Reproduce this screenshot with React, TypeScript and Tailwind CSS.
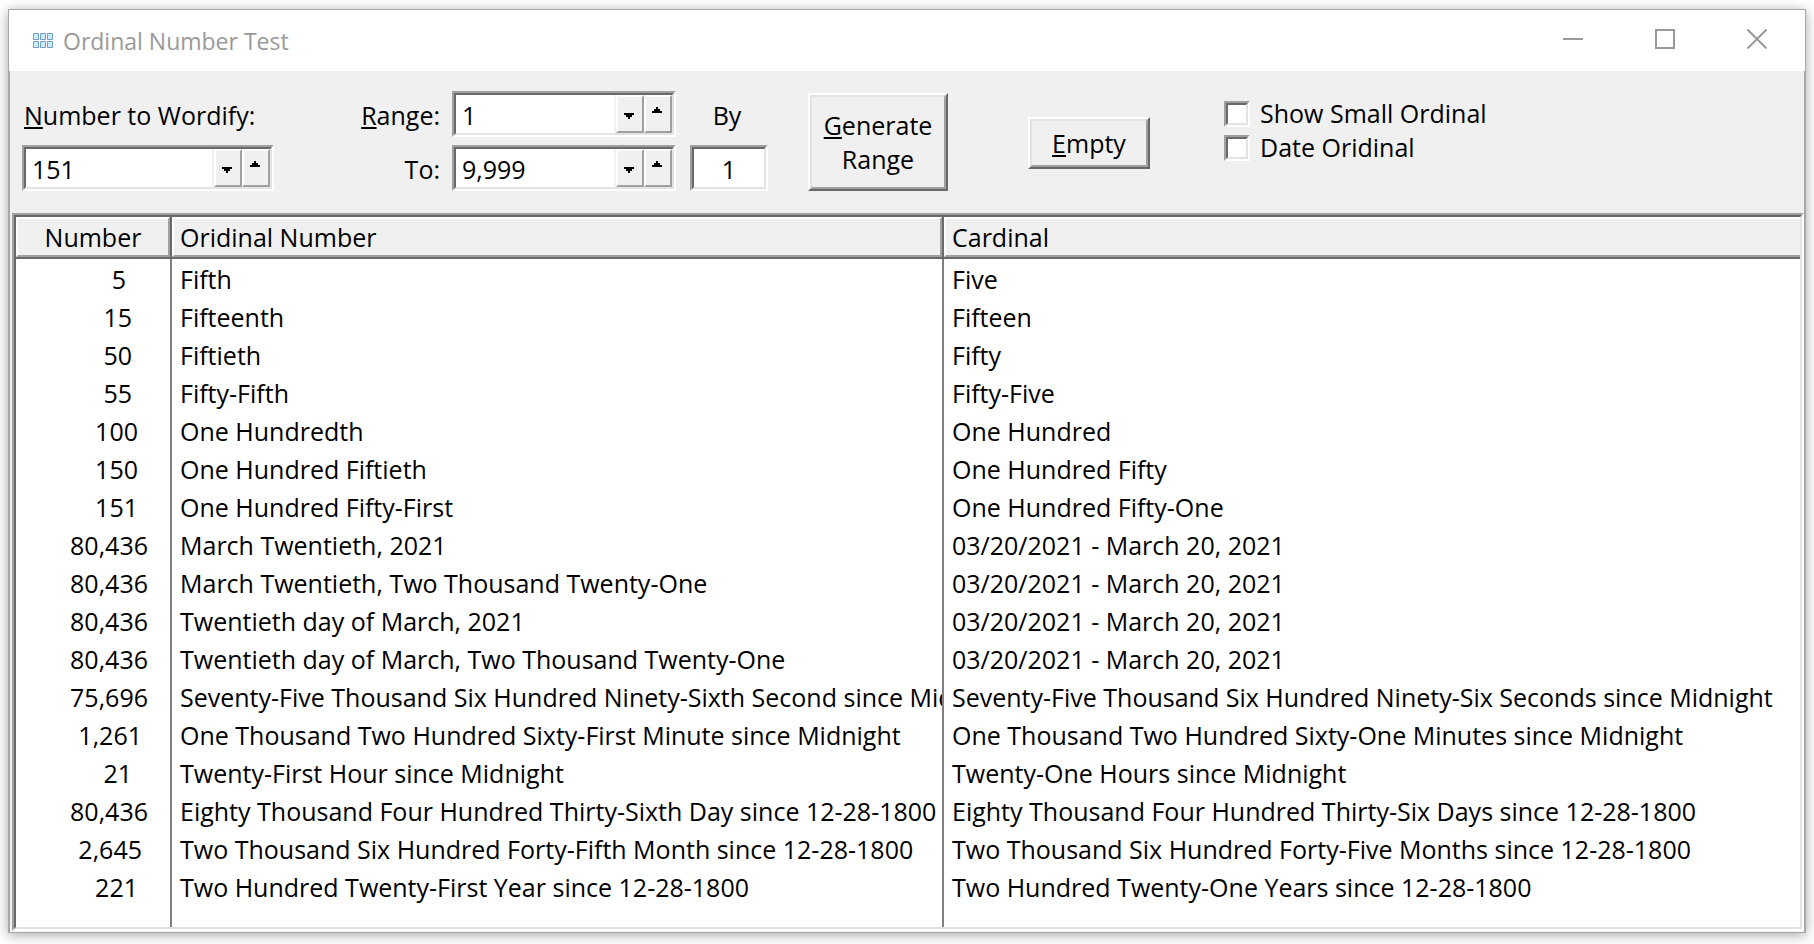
import type { ReactNode } from "react";

type Row = [string, string, string];

const rows: Row[] = [
  ["5", "Fifth", "Five"],
  ["15", "Fifteenth", "Fifteen"],
  ["50", "Fiftieth", "Fifty"],
  ["55", "Fifty-Fifth", "Fifty-Five"],
  ["100", "One Hundredth", "One Hundred"],
  ["150", "One Hundred Fiftieth", "One Hundred Fifty"],
  ["151", "One Hundred Fifty-First", "One Hundred Fifty-One"],
  ["80,436", "March Twentieth, 2021", "03/20/2021 - March 20, 2021"],
  ["80,436", "March Twentieth, Two Thousand Twenty-One", "03/20/2021 - March 20, 2021"],
  ["80,436", "Twentieth day of March, 2021", "03/20/2021 - March 20, 2021"],
  ["80,436", "Twentieth day of March, Two Thousand Twenty-One", "03/20/2021 - March 20, 2021"],
  ["75,696", "Seventy-Five Thousand Six Hundred Ninety-Sixth Second since Midnight", "Seventy-Five Thousand Six Hundred Ninety-Six Seconds since Midnight"],
  ["1,261", "One Thousand Two Hundred Sixty-First Minute since Midnight", "One Thousand Two Hundred Sixty-One Minutes since Midnight"],
  ["21", "Twenty-First Hour since Midnight", "Twenty-One Hours since Midnight"],
  ["80,436", "Eighty Thousand Four Hundred Thirty-Sixth Day since 12-28-1800", "Eighty Thousand Four Hundred Thirty-Six Days since 12-28-1800"],
  ["2,645", "Two Thousand Six Hundred Forty-Fifth Month since 12-28-1800", "Two Thousand Six Hundred Forty-Five Months since 12-28-1800"],
  ["221", "Two Hundred Twenty-First Year since 12-28-1800", "Two Hundred Twenty-One Years since 12-28-1800"],
];

/* Shorter numbers end further from the column's right edge. */
const numberPadding: Record<number, string> = {
  1: "pr-11",
  2: "pr-[38px]",
  3: "pr-8",
  5: "pr-7",
  6: "pr-[22px]",
};

function Sunken({ className, children }: { className: string; children: ReactNode }) {
  return (
    <div className={`border-2 border-t-[#a0a0a0] border-r-white border-b-white border-l-[#a0a0a0] ${className}`}>
      <div className="flex h-full border-2 border-t-[#696969] border-r-[#e3e3e3] border-b-[#e3e3e3] border-l-[#696969] bg-white">
        {children}
      </div>
    </div>
  );
}

function SpinButton({ label, up }: { label: string; up?: boolean }) {
  return (
    <button
      type="button"
      aria-label={label}
      className="flex w-7 shrink-0 items-center justify-center border-2 border-t-white border-r-[#a0a0a0] border-b-[#a0a0a0] border-l-white bg-[#f0f0f0] pr-0.5"
    >
      <svg width="10" height="14" viewBox="0 0 10 14" shapeRendering="crispEdges" aria-hidden="true">
        {up ? <path d="M4 0h2v2h2v2h2v2H0V4h2V2h2z" /> : <path d="M0 6h10v2H8v2H6v2H4v-2H2V8H0z" />}
      </svg>
    </button>
  );
}

function SpinBox({ id, value }: { id: string; value: string }) {
  return (
    <Sunken className="h-[46px] w-full">
      <input id={id} defaultValue={value} className="min-w-0 flex-1 border-r-2 border-[#f0f0f0] bg-transparent pt-1 pl-1.5 outline-none" />
      <SpinButton label="Decrease" />
      <SpinButton label="Increase" up />
    </Sunken>
  );
}

function Mnemonic({ children }: { children: string }) {
  return <span className="underline decoration-2 underline-offset-2">{children}</span>;
}

function PushButton({ className, children }: { className: string; children: ReactNode }) {
  return (
    <button type="button" className={`shrink-0 border-2 border-t-white border-r-[#696969] border-b-[#696969] border-l-white ${className}`}>
      <span className="flex h-full items-center justify-center border-2 border-t-[#e3e3e3] border-r-[#a0a0a0] border-b-[#a0a0a0] border-l-[#e3e3e3] leading-[34px]">
        <span>{children}</span>
      </span>
    </button>
  );
}

function CheckRow({ children }: { children: string }) {
  return (
    <label className="flex h-[26px] items-center gap-2.5 whitespace-nowrap">
      <span className="size-[26px] border-2 border-t-[#a0a0a0] border-r-white border-b-white border-l-[#a0a0a0]">
        <input
          type="checkbox"
          className="block size-full appearance-none border-2 border-t-[#696969] border-r-[#e3e3e3] border-b-[#e3e3e3] border-l-[#696969] bg-white checked:bg-[#696969]"
        />
      </span>
      {children}
    </label>
  );
}

function HeaderCell({ className = "", inner, last }: { className?: string; inner: string; last?: boolean }) {
  return (
    <th scope="col" className={`border-b-2 border-[#696969] p-0 font-normal ${last ? "" : "border-r-2"} ${className}`}>
      <div className={`h-10 overflow-hidden border-2 border-t-white border-b-[#a0a0a0] border-l-white bg-[#f0f0f0] leading-9 ${last ? "border-r-0" : "border-r-[#a0a0a0]"} ${className}`}>
        {inner}
      </div>
    </th>
  );
}

export default function App() {
  return (
    <div className="flex min-h-screen flex-col bg-white px-2 pt-[9px] pb-[11px] font-['Open_Sans','Noto_Sans',sans-serif] text-[25px] text-black">
      <div className="flex flex-1 flex-col border border-[#a8a8a8] bg-[#f0f0f0] shadow-[0_2px_12px_rgba(0,0,0,0.35)]">
        <header className="flex h-[61px] items-center bg-white pr-0.5 pl-6 text-[#999999]">
          <svg width="20" height="15" viewBox="0 0 20 15" className="shrink-0" aria-hidden="true">
            <g fill="#cfeafc" stroke="#6f9dc4">
              <path d="M.5.5h5v6h-5zM7.5.5h5v6h-5zM14.500.5h5v6h-5zM.5 8.500h5v6h-5zM7.500 8.500h5v6h-5zM14.500 8.500h5v6h-5z" />
            </g>
          </svg>
          <h1 className="ml-2.5 flex-1 pt-0.5 text-[23px]">Ordinal Number Test</h1>
          <div className="flex h-full shrink-0">
            <button type="button" aria-label="Minimize" className="flex w-[92px] items-center justify-center pb-1">
              <svg width="20" height="20"><path d="M0 10h20" stroke="#999" strokeWidth="2" /></svg>
            </button>
            <button type="button" aria-label="Maximize" className="flex w-[92px] items-center justify-center pb-1">
              <svg width="20" height="20"><path d="M1 1h18v18H1z" fill="none" stroke="#999" strokeWidth="2" /></svg>
            </button>
            <button type="button" aria-label="Close" className="flex w-[92px] items-center justify-center pb-1">
              <svg width="20" height="20"><path d="M.5.5l19 19M19.500.5l-19 19" stroke="#999" strokeWidth="2" /></svg>
            </button>
          </div>
        </header>

        <main className="flex flex-1 flex-col border-x border-[#a8a8a8]">
          <form className="flex items-start pt-5 pb-[22px] pl-3 whitespace-nowrap">
            <div className="grid w-[252px] shrink-0 grid-cols-1 gap-2">
              <label htmlFor="number" className="flex h-[46px] items-center pt-1 pl-0.5">
                <span><Mnemonic>N</Mnemonic>umber to Wordify:</span>
              </label>
              <SpinBox id="number" value="151" />
            </div>

            <div className="ml-[78px] grid shrink-0 grid-cols-[100px_224px_92px] items-center gap-y-2">
              <label htmlFor="from" className="pt-1 pr-3 text-right"><Mnemonic>R</Mnemonic>ange:</label>
              <SpinBox id="from" value="1" />
              <label htmlFor="by" className="pt-1 pl-2.5 text-center">By</label>
              <label htmlFor="to" className="pt-1 pr-3 text-right">To:</label>
              <SpinBox id="to" value="9,999" />
              <Sunken className="ml-3.5 h-[46px] w-[78px]">
                <input id="by" defaultValue="1" className="w-full bg-transparent pt-1 text-center outline-none" />
              </Sunken>
            </div>

            <PushButton className="ml-10 h-[98px] w-[140px] self-end">
              <Mnemonic>G</Mnemonic>enerate<br />Range
            </PushButton>
            <PushButton className="mt-[26px] ml-20 h-[52px] w-[122px]">
              <Mnemonic>E</Mnemonic>mpty
            </PushButton>

            <div className="mt-2.5 ml-[74px] grid gap-2">
              <CheckRow>Show Small Ordinal</CheckRow>
              <CheckRow>Date Oridinal</CheckRow>
            </div>
          </form>

          <div className="mb-px ml-0.5 flex flex-1 flex-col border-2 border-t-[#a0a0a0] border-r-white border-b-white border-l-[#a0a0a0] bg-white">
            <div className="flex-1 border-2 border-t-[#696969] border-r-[#e3e3e3] border-b-[#e3e3e3] border-l-[#696969]">
              <table className="w-full table-fixed border-separate border-spacing-0">
                <colgroup>
                  <col className="w-[156px]" />
                  <col className="w-[772px]" />
                  <col />
                </colgroup>
                <thead>
                  <tr>
                    <HeaderCell inner="Number" className="text-center" />
                    <HeaderCell inner="Oridinal Number" className="text-left indent-1.5" />
                    <HeaderCell inner="Cardinal" className="text-left indent-1.5" last />
                  </tr>
                </thead>
                <tbody>
                  <tr className="h-px">
                    <td className="border-r-2 border-[#808080] p-0" />
                    <td className="border-r-2 border-[#808080] p-0" />
                    <td className="p-0" />
                  </tr>
                  {rows.map(([number, ordinal, cardinal]) => (
                    <tr key={ordinal} className="h-[38px] leading-[38px] whitespace-nowrap">
                      <td className={`border-r-2 border-[#808080] py-0 text-right ${numberPadding[number.length]}`}>{number}</td>
                      <td className="overflow-hidden border-r-2 border-[#808080] py-0 pr-0 pl-2">{ordinal}</td>
                      <td className="overflow-hidden py-0 pr-0 pl-2">{cardinal}</td>
                    </tr>
                  ))}
                  <tr className="h-[21px]">
                    <td className="border-r-2 border-[#808080] p-0" />
                    <td className="border-r-2 border-[#808080] p-0" />
                    <td className="p-0" />
                  </tr>
                </tbody>
              </table>
            </div>
          </div>
        </main>
      </div>
    </div>
  );
}
